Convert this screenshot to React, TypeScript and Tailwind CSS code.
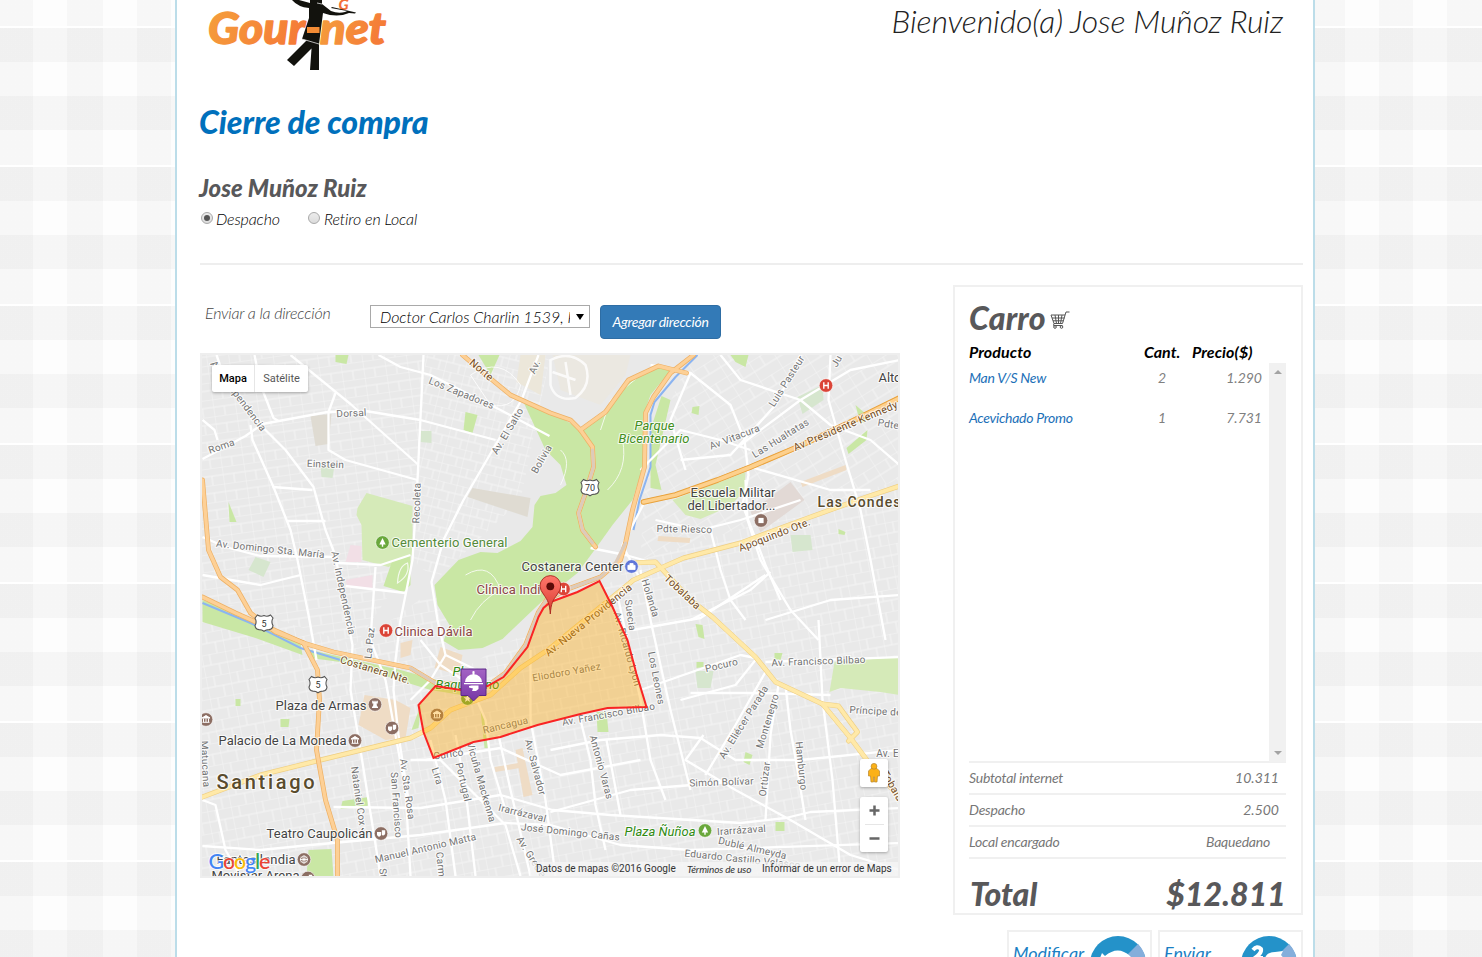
import React from "react";

type Pt = string;

const GREEN = "#c9e7a4";

const parks: { d: Pt; c: string }[] = [
  { c: GREEN, d: "523,402 550,412 580,429 605,412 628,380 655,365 672,368 650,395 643,415 643,465 632,500 612,525 597,546 577,573 543,600 525,617 502,639 482,648 458,650 443,641 449,625 437,605 434,585 458,560 480,552 497,553 520,541 532,527 534,505 540,496 555,493 566,485 560,465 545,450" },
  { c: "#d5eab8", d: "366,493 412,506 412,555 388,567 362,560 361,525 356,515 357,508" },
  { c: GREEN, d: "392,560 410,555 410,585 403,592 383,586" },
  { c: GREEN, d: "661,396 670,400 655,465 661,490 650,488 650,430" },
  { c: "#d5eab8", d: "672,500 745,472 744,490 730,506 700,519 685,515" },
  { c: "#d5eab8", d: "834,662 899,657 899,695 880,692 840,688 829,692" },
  { c: GREEN, d: "202,600 250,618 300,643 302,655 255,638 202,622" },
  { c: GREEN, d: "310,650 400,670 480,692 480,698 430,690 340,662 310,658" },
  { c: GREEN, d: "335,355 348,355 346,364 335,362" },
  { c: GREEN, d: "478,355 499,355 490,375" },
  { c: GREEN, d: "730,355 748,355 745,367 735,362" },
  { c: GREEN, d: "465,412 477,415 472,433 463,430" },
  { c: "#d6e6ce", d: "420,431 431,431 431,443 420,442" },
  { c: "#d6e6ce", d: "320,466 334,466 332,478 321,477" },
  { c: GREEN, d: "228,502 236,522 229,522" },
  { c: "#d6e6ce", d: "255,557 270,562 263,577 248,570" },
  { c: "#d6e6ce", d: "797,397 822,385 823,400 802,414" },
  { c: GREEN, d: "846,448 867,430 866,440 848,454" },
  { c: GREEN, d: "855,405 870,418 860,424" },
  { c: GREEN, d: "692,407 699,406 698,415 691,413" },
  { c: "#d6e6ce", d: "790,535 810,535 812,550 792,552" },
  { c: GREEN, d: "838,529 845,532 844,535 838,534" },
  { c: "#d6e6ce", d: "695,671 713,671 710,688 697,688" },
  { c: GREEN, d: "596,712 606,712 608,732 597,732" },
  { c: GREEN, d: "695,624 702,625 704,639 698,637" },
  { c: GREEN, d: "774,653 782,653 780,660 774,659" },
  { c: GREEN, d: "696,662 703,662 703,667 696,668" },
  { c: GREEN, d: "745,752 752,755 749,765 743,762" },
  { c: GREEN, d: "775,822 784,822 784,831 775,831" },
  { c: GREEN, d: "280,719 289,719 288,727 280,727" },
  { c: GREEN, d: "235,699 240,699 240,706 235,706" },
  { c: GREEN, d: "342,801 368,797 367,806 340,809" },
  { c: GREEN, d: "308,850 331,849 333,876 306,876" },
  { c: GREEN, d: "411,730 421,703 418,728" },
  { c: GREEN, d: "480,710 484,718 488,748 484,748" },
  { c: "#dfdbd2", d: "310,416 331,414 328,444 315,446" },
  { c: "#dfdbd2", d: "472,488 530,498 527,517 467,497" },
  { c: "#e2d9d5", d: "750,512 790,482 804,500 760,532" },
  { c: "#ebe8e1", d: "552,355 630,355 625,375 600,405 560,390" },
  { c: "#ece7da", d: "520,355 545,355 540,395 516,382" },
  { c: "#f2dfe6", d: "350,545 361,546 361,562 345,562" },
  { c: "#f2dfe6", d: "345,580 372,575 372,588 347,588" },
  { c: "#efdcc5", d: "364,695 395,700 410,708 405,738 385,740 358,725" },
  { c: "#efdcc5", d: "440,647 462,655 458,675 434,668" },
  { c: "#efdcc5", d: "400,643 412,640 410,655 400,658" },
  { c: "#efdcc5", d: "515,750 522,748 532,795 523,797" },
  { c: "#efdcc5", d: "494,767 518,763 519,768 495,772" },
  { c: "#efdcc5", d: "800,482 845,465 846,470 802,487" },
  { c: "#efdcc5", d: "658,536 690,538 689,543 657,541" },
];

const streets: Pt[] = [
  "202,459 245,436 262,424 327,412 365,411 420,420 495,440",
  "216,355 222,372 262,427 285,450 313,487 325,530 335,556 343,600 352,645",
  "290,355 350,404 417,464",
  "423,355 417,480 412,560 400,620 395,660",
  "250,425 252,440 273,487 290,530 297,560 308,615 316,660",
  "272,487 312,490",
  "335,393 328,412 328,450 345,460 417,480",
  "538,355 521,400 495,445 463,500 443,540 431,582 437,620 445,655 480,672",
  "378,355 400,367 430,375 500,410 549,436",
  "202,537 225,547 260,556 337,557",
  "287,521 325,521",
  "337,563 380,565 410,555",
  "345,586 405,593",
  "375,567 370,640 385,680 395,735 405,790 410,876",
  "202,420 214,430 217,440",
  "254,355 260,385 273,418 278,421",
  "202,575 260,585 300,575",
  "352,645 350,690 360,750 380,876",
  "395,660 393,690 398,735 408,800",
  "445,655 430,680 410,700",
  "202,800 215,805 225,850 240,876",
  "202,846 260,850 310,845 420,835 505,823 550,825 620,845 690,850 899,843",
  "333,807 420,808 500,795 552,810 610,815 740,823 785,818 810,812 899,808",
  "410,760 440,760 480,800 505,825 520,876",
  "420,640 440,665 470,685 485,720 490,760 505,810",
  "550,750 600,740 660,735 700,738 735,760 800,760 899,750",
  "550,812 630,790 740,781",
  "580,720 590,760 595,805 605,850",
  "618,600 640,700 650,760 665,800",
  "640,570 650,620 670,710 690,790",
  "606,740 620,815",
  "632,630 700,618 765,575",
  "640,690 740,655 755,658",
  "680,700 735,685 755,660",
  "690,693 760,693 830,695",
  "703,735 685,760 710,775 735,790 790,820 850,855 899,870",
  "765,672 735,725 705,775",
  "778,685 770,735 765,820",
  "785,686 790,730 797,770 805,820",
  "765,662 899,657",
  "818,620 822,700 832,780 840,876",
  "745,480 747,520 760,560 790,610 818,640",
  "690,373 730,405 744,440 748,475 742,505 765,565 780,600",
  "720,355 740,380 800,400 830,425 870,440 899,465",
  "800,355 775,405 730,455 680,460",
  "830,355 828,400 845,460 860,510 870,560 885,640",
  "740,445 800,400 850,370 899,360",
  "750,467 830,490 870,490",
  "655,520 700,530 740,520 800,500",
  "650,365 690,373 670,420 685,470",
  "644,502 622,545 640,580",
  "710,530 720,570 730,600 745,620",
  "765,620 830,600 899,595",
  "690,620 750,590 770,572",
  "640,470 680,430 720,440 750,450",
  "590,548 625,555 650,562",
  "530,650 530,720 545,800 555,876",
  "425,760 500,748 560,775 640,760",
  "430,740 445,800 455,876",
  "455,735 465,790 475,876",
  "498,735 510,790 530,876",
];

const highways: Pt[] = [
  "202,480 208,550 220,577 237,590 250,613 275,632 303,643",
  "202,597 235,613 303,643 333,652 410,668 435,683 487,686 505,673 525,645 538,612 546,600 570,588 600,577 620,560 625,543 632,510 644,467 645,413 653,397 670,373 693,355",
  "303,643 317,670 319,700 316,750 325,800 337,840 337,876",
  "462,355 482,372 510,395 550,413 570,420 580,430 592,447 593,467 585,493 578,513 582,530 595,547",
  "580,430 605,412 628,380 658,366 686,373",
  "643,502 675,495 717,480 750,467 797,447 850,422 899,398",
];

const avenues: Pt[] = [
  "899,486 863,498 810,517 740,543 683,558 633,580 600,607 550,648 520,668 490,695 450,710 430,728 410,738 320,760 260,775 202,797",
  "630,563 655,562 690,600 712,617 755,657 775,682 822,704 850,738 870,765 899,797",
  "822,704 838,706 857,732 848,741",
];

type Label = [string, number, number, number, number, string?];
const G = "#737373";
const B = "#744d24";
const labels: Label[] = [
  ["Roma", 221, 444, -19, 10],
  ["Av. Independencia", 238, 394, 53, 10],
  ["Dorsal", 351, 411, -3, 10],
  ["Einstein", 325, 462, 2, 10],
  ["Los Zapadores", 461, 391, 22, 10],
  ["Recoleta", 416, 501, -88, 10],
  ["Av. El Salto", 507, 429, -59, 10],
  ["Av.", 534, 365, -66, 10],
  ["Bolivia", 541, 457, -60, 10],
  ["Av. Domingo Sta. María", 270, 547, 6, 10],
  ["Av. Independencia", 343, 591, 78, 10],
  ["Luis Pasteur", 786, 379, -58, 10],
  ["Ju", 836, 359, -60, 10],
  ["Av Vitacura", 734, 435, -21, 10],
  ["Las Hualtatas", 780, 436, -32, 10],
  ["Av Presidente Kennedy", 845, 424, -23, 10.5, B],
  ["Norte", 481, 368, 40, 10.5, B],
  ["Apoquindo Ote.", 774, 533, -21, 10.5, B],
  ["Pdte Riesco", 684, 527, 1, 10],
  ["Pdte", 888, 422, 10, 10],
  ["Tobalaba", 682, 590, 43, 10.5, B],
  ["Holanda", 650, 596, 73, 10],
  ["Suecia", 630, 613, 82, 10],
  ["Av. Ricardo Lyon", 627, 647, 74, 10],
  ["Los Leones", 656, 676, 79, 10],
  ["Av. Nueva Providencia", 588, 618, -39, 10.5, B],
  ["Eliodoro Yañez", 566, 670, -10, 10],
  ["Rancagua", 505, 723, -13, 10],
  ["Av. Francisco Bilbao", 608, 712, -10, 10],
  ["Curicó", 448, 752, -8, 10],
  ["Costanera Nte.", 375, 668, 17, 10.5, B],
  ["La Paz", 369, 641, -84, 10],
  ["Matucana", 205, 762, 87, 10],
  ["Nataniel Cox", 358, 794, 82, 10],
  ["San Francisco", 396, 803, 86, 10],
  ["Av. Sta. Rosa", 407, 787, 82, 10],
  ["Lira", 437, 774, 72, 10],
  ["Portugal", 463, 780, 77, 10],
  ["Vicuña Mackenna", 481, 780, 74, 10],
  ["Av. Salvador", 535, 765, 75, 10],
  ["Irarrázaval", 522, 811, 14, 10],
  ["José Domingo Cañas", 570, 830, 6, 10],
  ["Manuel Antonio Matta", 425, 846, -13, 10],
  ["Av. Grecia", 531, 855, 58, 10],
  ["Carmen", 441, 868, 84, 10],
  ["Sta", 383, 874, 84, 10],
  ["Antonio Varas", 601, 765, 75, 10],
  ["Pocuro", 721, 663, -13, 10],
  ["Av. Francisco Bilbao", 818, 659, -2, 10],
  ["Av. Eliécer Parada", 743, 720, -58, 10],
  ["Montenegro", 767, 719, -73, 10],
  ["Ortúzar", 764, 777, -83, 10],
  ["Hamburgo", 801, 764, 84, 10],
  ["Simón Bolívar", 721, 780, -2, 10],
  ["Príncipe de", 875, 709, 3, 10],
  ["Av. E", 887, 751, 0, 10],
  ["Tobalaba", 895, 789, 60, 10.5, B],
  ["Irarrázaval", 741, 828, -4, 10],
  ["Dublé Almeyda", 752, 846, 13, 10],
  ["Eduardo Castillo Velasco", 742, 857, 6, 10],
];

type Place = [string, number, number, number, string, string?];
const places: Place[] = [
  ["Cementerio General", 391, 546.5, 116, "#558b3a"],
  ["Costanera Center", 521, 570.5, 102, "#444"],
  ["Clínica Indi", 476, 593.5, 64, "#8c4545"],
  ["Clinica Dávila", 394, 635.5, 78, "#8c4545"],
  ["Plaza de Armas", 275, 709.5, 91, "#444"],
  ["Palacio de La Moneda", 218, 744.5, 128, "#444"],
  ["Teatro Caupolicán", 266, 837.5, 106, "#444"],
  ["Fantasilandia", 216, 863.5, 79, "#444"],
  ["Movistar Arena", 211, 880, 88, "#444"],
  ["Escuela Militar", 690, 496.5, 85, "#444"],
  ["del Libertador...", 687, 509.5, 88, "#444"],
  ["Alto", 878, 381.5, 23, "#444"],
  ["Parque", 634, 429.5, 40, "#418e20", "italic"],
  ["Bicentenario", 618, 442.5, 71, "#418e20", "italic"],
  ["Plaza Ñuñoa", 624, 835.5, 71, "#2f8a12", "italic"],
  ["Plaza", 452, 675.5, 30, "#2f8a12", "italic"],
  ["Baquedano", 435, 688.5, 64, "#2f8a12", "italic"],
];

function Dot({ x, y, c, kind }: { x: number; y: number; c: string; kind: string }) {
  return (
    <g transform={`translate(${x} ${y})`}>
      <circle r="6.8" fill={c} stroke="#fff" strokeOpacity=".6" strokeWidth="1" />
      {kind === "H" && <path d="M-2.2 -3.3V3.3M2.2 -3.3V3.3M-2.2 0H2.2" stroke="#fff" strokeWidth="1.4" />}
      {kind === "tree" && <path d="M0 -4.5L3.2 2H.7V4.3H-.7V2H-3.2Z" fill="#fff" />}
      {kind === "sq" && <rect x="-2.6" y="-2.6" width="5.2" height="5.2" fill="#fff" />}
      {kind === "bank" && <path d="M-4 -1.5L0 -4L4 -1.5ZM-3.5 2.8H3.5M-2.5 -1V2.5M0 -1V2.5M2.5 -1V2.5" fill="#fff" stroke="#fff" strokeWidth="1" />}
      {kind === "bag" && <path d="M-3.6 -1.2H3.6V3H-3.6ZM-1.6 -1.2V-3H1.6V-1.2" fill="#fff" stroke="#fff" strokeWidth=".8" />}
      {kind === "tower" && <path d="M-2.8 -3.8H-1.4V-2.8H-.6V-3.8H.6V-2.8H1.4V-3.8H2.8V-1H1.6L2 2H3V3.5H-3V2H-2L-1.6 -1H-2.8Z" fill="#fff" />}
      {kind === "mask" && <path d="M-4 -1.5H.2V1.5Q-2 5 -4 1.5ZM.8 -3.2H4.2V.2Q3 3 1 1.5Z" fill="#fff" />}
      {kind === "star" && <path d="M0 -4L1.1 -1.2H4L1.7 .6L2.5 3.5L0 1.8L-2.5 3.5L-1.7 .6L-4 -1.2H-1.1Z" fill="#fff" />}
      {kind === "wheel" && <path d="M0 -3.5A3.5 3.5 0 1 1 -.1 -3.5ZM0 -4V4M-4 0H4M-2.8 -2.8L2.8 2.8M2.8 -2.8L-2.8 2.8" fill="none" stroke="#fff" strokeWidth=".9" />}
    </g>
  );
}

function Shield({ x, y, n }: { x: number; y: number; n: string }) {
  return (
    <g transform={`translate(${x} ${y})`}>
      <path d="M-6.5 -8Q-3.5 -5.8 0 -7.4Q3.5 -5.8 6.5 -8L9 -5Q6.8 -1 9 2.6Q8.5 6.2 5 6.6Q2 6.6 0 8.2Q-2 6.6 -5 6.6Q-8.5 6.2 -9 2.6Q-6.8 -1 -9 -5Z" fill="#fff" stroke="#555" strokeWidth="1.1" />
      <text y="3.6" textAnchor="middle" fontSize="9" fill="#333">{n}</text>
    </g>
  );
}

function MapCanvas() {
  return (
    <svg viewBox="201.5 355 696 521" width="696" height="521" className="block font-[Roboto,sans-serif]">
      <defs>
        <pattern id="ga" width="22" height="17" patternUnits="userSpaceOnUse" patternTransform="rotate(-8)">
          <path d="M0 0H22M0 8H22M0 0V17M11 8V17" stroke="#f6f6f6" strokeWidth=".9" fill="none" />
        </pattern>
        <pattern id="gb" width="20" height="18" patternUnits="userSpaceOnUse" patternTransform="rotate(14)">
          <path d="M0 0H20M0 9H20M0 0V18M7 0V9M14 9V18" stroke="#f6f6f6" strokeWidth=".9" fill="none" />
        </pattern>
        <pattern id="gc" width="26" height="22" patternUnits="userSpaceOnUse" patternTransform="rotate(-32)">
          <path d="M0 0H26M0 11H26M0 0V22M13 11V0" stroke="#f6f6f6" strokeWidth=".9" fill="none" />
        </pattern>
        <pattern id="gd" width="24" height="22" patternUnits="userSpaceOnUse" patternTransform="rotate(-11)">
          <path d="M0 0H24M0 11H24M0 0V22M8 0V11M16 11V22" stroke="#f6f6f6" strokeWidth=".9" fill="none" />
        </pattern>
        <linearGradient id="pin" x1="0" y1="0" x2="0" y2="1">
          <stop offset="0" stopColor="#ff776b" />
          <stop offset="1" stopColor="#d93a30" />
        </linearGradient>
        <linearGradient id="dish" x1="0" y1="0" x2="0" y2="1">
          <stop offset="0" stopColor="#a463c4" />
          <stop offset="1" stopColor="#7636a5" />
        </linearGradient>
      </defs>
      <rect x="201" y="355" width="699" height="521" fill="#e9e9e9" />
      <polygon points="201,355 425,355 412,560 355,645 201,595" fill="url(#ga)" />
      <polygon points="425,355 550,355 520,500 435,580 412,560" fill="url(#gb)" />
      <polygon points="690,355 899,355 899,480 640,560 645,460" fill="url(#gc)" />
      <polygon points="201,595 355,645 440,585 460,670 600,590 640,560 899,480 899,876 201,876" fill="url(#gd)" />
      {parks.map((p, i) => <polygon key={i} points={p.d} fill={p.c} />)}
      <g fill="none" stroke="#fff" strokeWidth="1" opacity=".8">
        <path d="M550 360Q570 350 585 365Q592 385 575 398Q555 402 550 385ZM552 372L575 380M565 362L570 395" strokeWidth="2.5" />
        <path d="M470 375Q500 355 520 385Q515 410 490 405ZM640 375L610 400L600 430M622 440Q628 470 607 490M560 450Q572 460 560 485M465 575Q490 560 500 590Q480 600 470 620" />
        <path d="M397 583Q398 566 407 563Q410 575 397 583Z" strokeWidth="1.2" />
      </g>
      <g fill="none" stroke="#8bb4f1" strokeWidth="2">
        <polyline points="697,355 675,377 654,402 650,415 650,467 639,500 633,530" />
        <polyline points="202,603 250,623 300,648 340,660" />
      </g>
      <g fill="none" stroke="#fff" strokeWidth="2.3" strokeLinejoin="round">
        {streets.map((s, i) => <polyline key={i} points={s} />)}
      </g>
      <g fill="none" strokeLinejoin="round" strokeLinecap="round">
        {avenues.map((s, i) => <polyline key={i} points={s} stroke="#efcf83" strokeWidth="5" />)}
        {avenues.map((s, i) => <polyline key={i} points={s} stroke="#ffe9a8" strokeWidth="3.8" />)}
        {highways.map((s, i) => <polyline key={i} points={s} stroke="#eeb064" strokeWidth="4.800" />)}
        {highways.map((s, i) => <polyline key={i} points={s} stroke="#fdd096" strokeWidth="3.4" />)}
        <polyline points="592,450 593,467 585,493 578,513 582,530 592,543" stroke="#dccbbb" strokeWidth="3" />
        <polyline points="625,543 615,563 600,577 570,588 546,600 538,612 525,645 505,673 487,686 435,683 410,668" stroke="#dccbbb" strokeWidth="3" />
        <polyline points="643,502 675,495 717,480 750,467 797,447 850,422 899,398" stroke="#e9a33e" strokeWidth="5.6" />
        <polyline points="643,502 675,495 717,480 750,467 797,447 850,422 899,398" stroke="#fdd08d" strokeWidth="3.6" />
      </g>
      <g fontSize="10" textAnchor="middle" dominantBaseline="alphabetic" stroke="#fff" strokeWidth="2.2" strokeOpacity=".75" strokeLinejoin="round" letterSpacing=".25" style={{ paintOrder: "stroke" }}>
        {labels.map(([t, x, y, a, s, c], i) => (
          <text key={i} y="3.5" fontSize={s} fill={c ?? G} transform={`translate(${x} ${y + 2}) rotate(${a})`}>{t}</text>
        ))}
      </g>
      <g fontSize="13" stroke="#fff" strokeWidth="2.2" strokeOpacity=".8" strokeLinejoin="round" style={{ paintOrder: "stroke" }}>
        {places.map(([t, x, y, w, c, st], i) => (
          <text key={i} x={x} y={y} textLength={w} fill={c} fontStyle={st ?? "normal"}>{t}</text>
        ))}
        <text x="216" y="789" fontSize="20" textLength="98" fontWeight="500" fill="#594b2d">Santiago</text>
        <text x="817" y="507" fontSize="14" textLength="83" fontWeight="500" fill="#594b2d">Las Condes</text>
      </g>
      <Dot x={382} y={542.5} c="#6aa83c" kind="tree" />
      <Dot x={631} y={566.5} c="#6076d8" kind="bag" />
      <Dot x={563} y={589} c="#db4437" kind="H" />
      <Dot x={385.5} y={630.5} c="#db4437" kind="H" />
      <Dot x={825.5} y={385.5} c="#db4437" kind="H" />
      <Dot x={760.5} y={520.5} c="#8c6e63" kind="sq" />
      <Dot x={374.5} y={704.5} c="#8c6e63" kind="tower" />
      <Dot x={391.5} y={728} c="#8c6e63" kind="mask" />
      <Dot x={354.5} y={740.5} c="#8c6e63" kind="bank" />
      <Dot x={205.5} y={719.5} c="#8c6e63" kind="bank" />
      <Dot x={436.5} y={715} c="#8c6e63" kind="bank" />
      <Dot x={467} y={698.5} c="#6aa83c" kind="star" />
      <Dot x={380.5} y={833.5} c="#8c6e63" kind="mask" />
      <Dot x={303.5} y={859.5} c="#8c6e63" kind="wheel" />
      <Dot x={307.5} y={878} c="#8c6e63" kind="mask" />
      <Dot x={704.5} y={830.5} c="#6aa83c" kind="tree" />
      <Shield x={589.5} y={487.5} n="70" />
      <Shield x={263.5} y={623} n="5" />
      <Shield x={317.5} y={684.5} n="5" />
      <polygon
        points="435,686 460,690 487,686 503,677 527,647 538,617 543,608 550,602 577,592 599,581 612,607 627,640 636,674 646,707 607,708 580,714 537,725 500,737 473,742 433,758 423,732 418,705"
        fill="#ffa500" fillOpacity=".37" stroke="#f92424" strokeWidth="2"
      />
      <path d="M549.8 614C549 603 547 600 543.5 595Q539.5 590 539.5 586A10.4 10.4 0 0 1 560.3 586Q560.3 590 556.3 595C552.6 600 550.6 603 549.8 614Z" fill="url(#pin)" stroke="#a8261d" strokeWidth=".9" />
      <circle cx="549.8" cy="586.3" r="3.9" fill="#5a0b08" />
      <path d="M460.500 669H485.500V695.500H478.500L473 701L467.500 695.500H460.500Z" fill="url(#dish)" stroke="#5b2886" strokeWidth="1" />
      <path d="M464.5 682A8.5 7.8 0 0 1 481.5 682ZM472 672.8A1.200 1.200 0 1 1 474 672.8V674.5H472ZM463.5 683H482.5V684.2H463.5Z" fill="#fff" />
      <path d="M468.500 686L471 685.500H478V689L475.500 691H471.500L472.500 688.500L468.500 687.500Z" fill="#fff" />
      <text x="208" y="869" fontSize="21.5" fontFamily="Lato, sans-serif" fontWeight="500" textLength="62" stroke="#fff" strokeWidth="2" strokeOpacity=".7" style={{ paintOrder: "stroke" }}>
        <tspan fill="#4285f4">G</tspan><tspan fill="#ea4335">o</tspan><tspan fill="#fbbc05">o</tspan><tspan fill="#4285f4">g</tspan><tspan fill="#34a853">l</tspan><tspan fill="#ea4335">e</tspan>
      </text>
    </svg>
  );
}

function MapControls() {
  return (
    <>
      <div className="absolute left-[10px] top-[10px] flex h-[27px] rounded-[2px] bg-white font-[Roboto,sans-serif] text-[11px] leading-[27px] shadow-[0_1px_3px_rgba(0,0,0,0.3)]">
        <div className="w-[43px] border-r border-[#e6e6e6] text-center font-medium text-black">Mapa</div>
        <div className="w-[53px] text-center text-[#565656]">Satélite</div>
      </div>
      <div className="absolute right-[10px] top-[404px] flex h-7 w-7 items-center justify-center rounded-[2px] bg-white shadow-[0_1px_3px_rgba(0,0,0,0.3)]">
        <svg width="14" height="20" viewBox="0 0 14 20">
          <path d="M4 5.500H10L12.500 8V13H10.500L10 19H7.500V14H6.500V19H4L3.500 13H1.500V8Z" fill="#fbb117" stroke="#b9872c" strokeWidth=".7" />
          <circle cx="7" cy="3.300" r="2.900" fill="#fbb117" stroke="#b9872c" strokeWidth=".7" />
        </svg>
      </div>
      <div className="absolute right-[10px] top-[442px] flex h-[55px] w-7 flex-col items-center rounded-[2px] bg-white shadow-[0_1px_3px_rgba(0,0,0,0.3)]">
        <svg width="11" height="27" viewBox="0 0 11 27"><path d="M0.5 13.5H10.5M5.5 8.5V18.5" stroke="#666" strokeWidth="2.5" /></svg>
        <div className="h-px w-[19px] bg-[#e6e6e6]" />
        <svg width="11" height="27" viewBox="0 0 11 27"><path d="M0.5 13.5H10.5" stroke="#666" strokeWidth="2.5" /></svg>
      </div>
      <div className="absolute bottom-0 right-0 flex h-[14px] items-center gap-[12px] whitespace-nowrap bg-[#f5f5f5]/75 pl-[6px] pr-[6px] font-[Roboto,sans-serif] text-[10px] leading-[14px] text-[#333]">
        <span className="w-[139px] tracking-[0.02px]">Datos de mapas ©2016 Google</span>
        <span className="w-[63px] font-[Lato,sans-serif] text-[10px] italic tracking-[-0.15px]">Términos de uso</span>
        <span className="w-[130px]">Informar de un error de Maps</span>
      </div>
    </>
  );
}

function Logo() {
  return (
    <svg width="190" height="75" viewBox="204 0 190 75" className="block">
      <defs>
        <linearGradient id="org" x1="0" x2="1" y1="0" y2=".3">
          <stop offset="0" stopColor="#f5a03c" />
          <stop offset="1" stopColor="#f57c38" />
        </linearGradient>
      </defs>
      <g fontFamily="Lato, sans-serif" fontWeight="900" fontStyle="italic" fontSize="44" fill="url(#org)" stroke="url(#org)" strokeWidth="1.4" strokeLinejoin="round">
        <text x="208" y="43.500" textLength="97" lengthAdjust="spacingAndGlyphs">Gour</text>
        <text x="320" y="43.500" textLength="66" lengthAdjust="spacingAndGlyphs">net</text>
      </g>
      <text x="338.500" y="9.500" fontFamily="Lato, sans-serif" fontWeight="900" fontStyle="italic" fontSize="15" fill="#f36f38">G</text>
      <path d="M292 0H299L310 3V0H322V4L331 11Q338 14 345 12L347 11L331 8L332 7L356 12.500L355 13.500L349 13Q337 18 323 13L319 44L302 39L309 18L309 8Q298 7 292 0Z" fill="#12120d" />
      <path d="M307 40L317 43L294 66L287 60ZM312 42L319 43L319 70H310Z" fill="#12120d" />
      <path d="M317 3L322 4M302 39L319 44" stroke="#ddd" strokeWidth=".8" />
      <rect x="307" y="27" width="12.5" height="6" fill="#f38b34" />
    </svg>
  );
}

function Radio({ checked }: { checked?: boolean }) {
  return (
    <span className="relative -top-px flex h-3 w-3 items-center justify-center rounded-full border border-[#a9a9a9] bg-linear-to-b from-[#ececec] to-[#dcdcdc]">
      {checked && <span className="h-1.5 w-1.5 rounded-full bg-[#555]" />}
    </span>
  );
}

function CartIcon() {
  return (
    <svg width="20" height="18" viewBox="0 0 20 18" fill="none" stroke="#555" strokeWidth="1">
      <path d="M19.5 1H16L12.5 12.5H4L1 4H15M2 7H14.5M3 9.8H13.5M5 4L6.5 12.5M8.5 4V12.5M12 4L10.5 12.5M4 12.5L3.5 14.5H12.5" />
      <circle cx="5" cy="16" r="1.3" />
      <circle cx="11.5" cy="16" r="1.3" />
    </svg>
  );
}

const products = [
  { name: "Man V/S New", qty: "2", price: "1.290" },
  { name: "Acevichado Promo", qty: "1", price: "7.731" },
];

const summary = [
  { k: "Subtotal internet", v: "10.311", p: "pr-[7px]", t: "tracking-normal" },
  { k: "Despacho", v: "2.500", p: "pr-[7px]", t: "tracking-normal" },
  { k: "Local encargado", v: "Baquedano", p: "pr-[16px]", t: "tracking-[-0.23px]" },
];

function Cart() {
  return (
    <aside className="h-[630px] w-[350px] border-2 border-[#f0f0f0] pl-[14px] pr-[15px]">
      <div className="flex h-[56px] items-center gap-[4px] pt-[6px]">
        <h2 className="text-[32px] font-black leading-10 tracking-[0.2px] text-[#58585a]">Carro</h2>
        <span className="mt-1"><CartIcon /></span>
      </div>
      <div className="flex h-[19px] text-[16px] font-bold leading-[17px] text-black">
        <span className="w-[175px] tracking-[0.1px]">Producto</span>
        <span className="w-[48px]">Cant.</span>
        <span className="tracking-[0.1px]">Precio($)</span>
      </div>
      <div className="mt-px flex h-[399px] text-[14px]">
        <div className="flex-1">
          {products.map((p) => (
            <div key={p.name} className="flex h-10 leading-[30px] text-[#808080]">
              <span className="w-[176px] tracking-[-0.27px] text-[#1c70b8]">{p.name}</span>
              <span className="w-[34px] text-center">{p.qty}</span>
              <span className="flex-1 pr-[7px] text-right">{p.price}</span>
            </div>
          ))}
        </div>
        <div className="flex w-[17px] flex-col items-center justify-between bg-[#f1f1f1] py-[7px]">
          <span className="border-x-[4px] border-b-[4px] border-x-transparent border-b-[#a3a3a3]" />
          <span className="border-x-[4px] border-t-[4px] border-x-transparent border-t-[#a3a3a3]" />
        </div>
      </div>
      <div className="-mt-px h-[2px] bg-[#f0f0f0]" />
      {summary.map((s) => (
        <div key={s.k} className={`flex h-8 justify-between border-b-2 border-[#f0f0f0] text-[14px] leading-[30px] text-[#777] ${s.p}`}>
          <span className="tracking-[-0.23px]">{s.k}</span>
          <span className={s.t}>{s.v}</span>
        </div>
      ))}
      <div className="flex justify-between pt-[14px] text-[32px] font-black leading-[42px] text-[#58585a]">
        <span className="pl-px">Total</span>
        <span className="tracking-[0.1px]">$12.811</span>
      </div>
    </aside>
  );
}

function Action({ label, children }: { label: string; children: React.ReactNode }) {
  return (
    <div className="flex h-[70px] w-[145px] justify-between border-2 border-[#f0f0f0] pl-[4px] pr-[4px] pt-[4px]">
      <span className="pt-[6px] text-[18px] leading-[22px] text-[#1b7fc4]">{label}</span>
      <svg width="56" height="56" viewBox="0 0 56 56">
        <circle cx="28" cy="28" r="28" fill="#2492c9" />
        <path d="M28 28L48 8A28 28 0 0 1 54 38Z" fill="#85aedb" />
        {children}
      </svg>
    </div>
  );
}

export default function App() {
  return (
    <div className="h-[957px] w-[1482px] overflow-hidden bg-[#fdfdfd] bg-[image:repeating-linear-gradient(to_bottom,transparent_0_26px,#fff_26px_28px,transparent_28px_139px),repeating-linear-gradient(to_bottom,rgba(0,0,0,0)_0_28px,rgba(0,0,0,0.026)_28px_62px,rgba(0,0,0,0)_62px_96px,rgba(0,0,0,0.026)_96px_130px,rgba(0,0,0,0)_130px_139px),repeating-linear-gradient(to_right,rgba(0,0,0,0.024)_0_33px,rgba(0,0,0,0)_33px_67px,rgba(0,0,0,0.024)_67px_103px,rgba(0,0,0,0)_103px_137px,rgba(0,0,0,0.024)_137px_138px)] font-[Lato,sans-serif] italic">
      <main className="ml-[175px] h-full w-[1140px] border-x-2 border-[#bcdde9] bg-white pl-[23px] pr-[10px]">
        <header className="flex h-[98px] justify-between pl-[4px] pr-[20px]">
          <Logo />
          <div className="text-[32px] font-light leading-[42px] tracking-[-0.14px] text-[#222]">Bienvenido(a) Jose Muñoz Ruiz</div>
        </header>
        <h1 className="-ml-px text-[32px] font-black leading-[48px] tracking-[-0.03px] text-[#0070bc]">Cierre de compra</h1>
        <h2 className="-ml-px mt-[26px] text-[24px] font-black leading-8 text-[#58585a]">Jose Muñoz Ruiz</h2>
        <div className="mt-[3px] flex h-6 items-center text-[16px] font-light tracking-[-0.13px] text-black">
          <label className="flex w-[107px] items-center gap-[3px] pl-px"><Radio checked />Despacho</label>
          <label className="flex items-center gap-[4px] pl-px"><Radio />Retiro en Local</label>
        </div>
        <div className="mt-[32px] h-[2px] bg-[#eee]" />
        <div className="mt-[20px] flex justify-between">
          <section className="w-[700px]">
            <div className="flex h-[68px] items-start pt-[20px]">
              <span className="w-[170px] pl-[5px] text-[16px] font-light leading-[16px] tracking-[-0.2px] text-[#444]">Enviar a la dirección</span>
              <div className="flex h-[23px] w-[220px] items-center border border-[#a9a9a9] pl-[9px] pr-[5px] text-[16px] font-light leading-[22px] text-black">
                <span className="w-[191px] overflow-hidden whitespace-nowrap tracking-[-0.07px]">Doctor Carlos Charlin 1539, Providencia</span>
                <span className="ml-[6px] border-x-[4px] border-t-[6px] border-x-transparent border-t-black" />
              </div>
              <button className="ml-[10px] h-[34px] w-[121px] rounded-[4px] border border-[#2e6da4] bg-[#337ab7] pb-[2px] text-[14px] italic tracking-[-0.27px] text-white">Agregar dirección</button>
            </div>
            <div className="relative h-[525px] overflow-hidden border-2 border-[#eee] not-italic">
              <MapCanvas />
              <MapControls />
            </div>
          </section>
          <div className="flex flex-col items-end">
            <Cart />
            <div className="mt-[15px] flex gap-[6px]">
              <Action label="Modificar">
                <path d="M10 22L12 17L15 20Q28 9 40 20Q48 28 44 40H12Q6 30 10 22Z" fill="#fff" />
              </Action>
              <Action label="Enviar">
                <path d="M12 14Q16 9 20 13Q21 17 14 22H22" fill="none" stroke="#fff" strokeWidth="4" />
                <path d="M23 26Q24 16 34 16L42 15L40 19L46 26Z" fill="#fff" />
              </Action>
            </div>
          </div>
        </div>
      </main>
    </div>
  );
}
